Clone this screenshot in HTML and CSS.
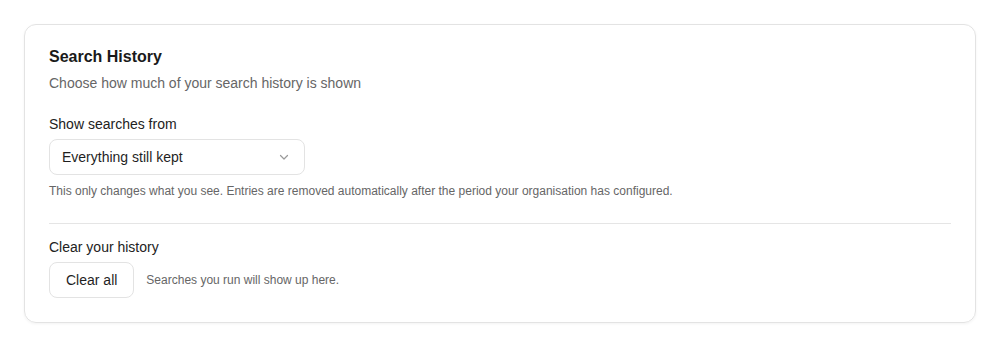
FILE: index.html
```html
<!DOCTYPE html>
<html lang="en">
<head>
  <meta charset="UTF-8" />
  <title>Search History</title>
  <link rel="stylesheet" href="styles.css">
</head>
<body>

  <!-- Settings card -->
  <div class="card">
    <h2>Search History</h2>
    <p class="subtitle">Choose how much of your search history is shown</p>

    <label class="field-label">Show searches from</label>
    <div class="select">
      <span>Everything still kept</span>
      <svg class="chevron" width="12" height="12" viewBox="0 0 12 12" fill="none">
        <path d="M2.5 4.5 L6 8 L9.5 4.5" stroke="#9a9a9a" stroke-width="1.2" stroke-linecap="round" stroke-linejoin="round"/>
      </svg>
    </div>
    <p class="hint">This only changes what you see. Entries are removed automatically after the period your organisation has configured.</p>

    <hr class="divider">

    <label class="field-label second">Clear your history</label>
    <div class="clear-row">
      <button>Clear all</button>
      <span class="hint inline">Searches you run will show up here.</span>
    </div>
  </div>

</body>
</html>
```

FILE: styles.css
```css
* {
  box-sizing: border-box;
}

body {
  margin: 0;
  padding: 24px;
  font-family: 'Liberation Sans', Arial, sans-serif;
  background-color: #ffffff;
  color: #1f1f1f;
}

/* Card */
.card {
  border: 1px solid #e3e3e3;
  border-radius: 12px;
  padding: 22px 24px 24px;
  box-shadow: 0 1px 3px rgba(0,0,0,0.05);
}

h2 {
  margin: 0;
  font-size: 16px;
  line-height: 20px;
  font-weight: bold;
  color: #1a1a1a;
}

.subtitle {
  margin: 6px 0 0;
  font-size: 14px;
  line-height: 20px;
  color: #666666;
}

.field-label {
  display: block;
  margin-top: 21px;
  font-size: 14px;
  line-height: 20px;
  color: #222222;
}

.field-label.second {
  margin-top: 13px;
}

.select {
  margin-top: 5px;
  width: 256px;
  height: 36px;
  border: 1px solid #e3e3e3;
  border-radius: 8px;
  padding: 0 14px 0 12px;
  display: flex;
  align-items: center;
  justify-content: space-between;
  font-size: 14px;
  color: #1f1f1f;
}

.hint {
  margin: 8px 0 0;
  font-size: 12px;
  line-height: 16px;
  color: #666666;
}

.divider {
  margin: 24px 0 0;
  border: none;
  border-top: 1px solid #e5e5e5;
}

.clear-row {
  margin-top: 5px;
  display: flex;
  align-items: center;
  gap: 12px;
}

.hint.inline {
  margin: 0;
}

button {
  height: 36px;
  padding: 0 16px;
  background: #ffffff;
  border: 1px solid #e3e3e3;
  border-radius: 8px;
  font-family: inherit;
  font-size: 14px;
  color: #1f1f1f;
  cursor: pointer;
}
```
